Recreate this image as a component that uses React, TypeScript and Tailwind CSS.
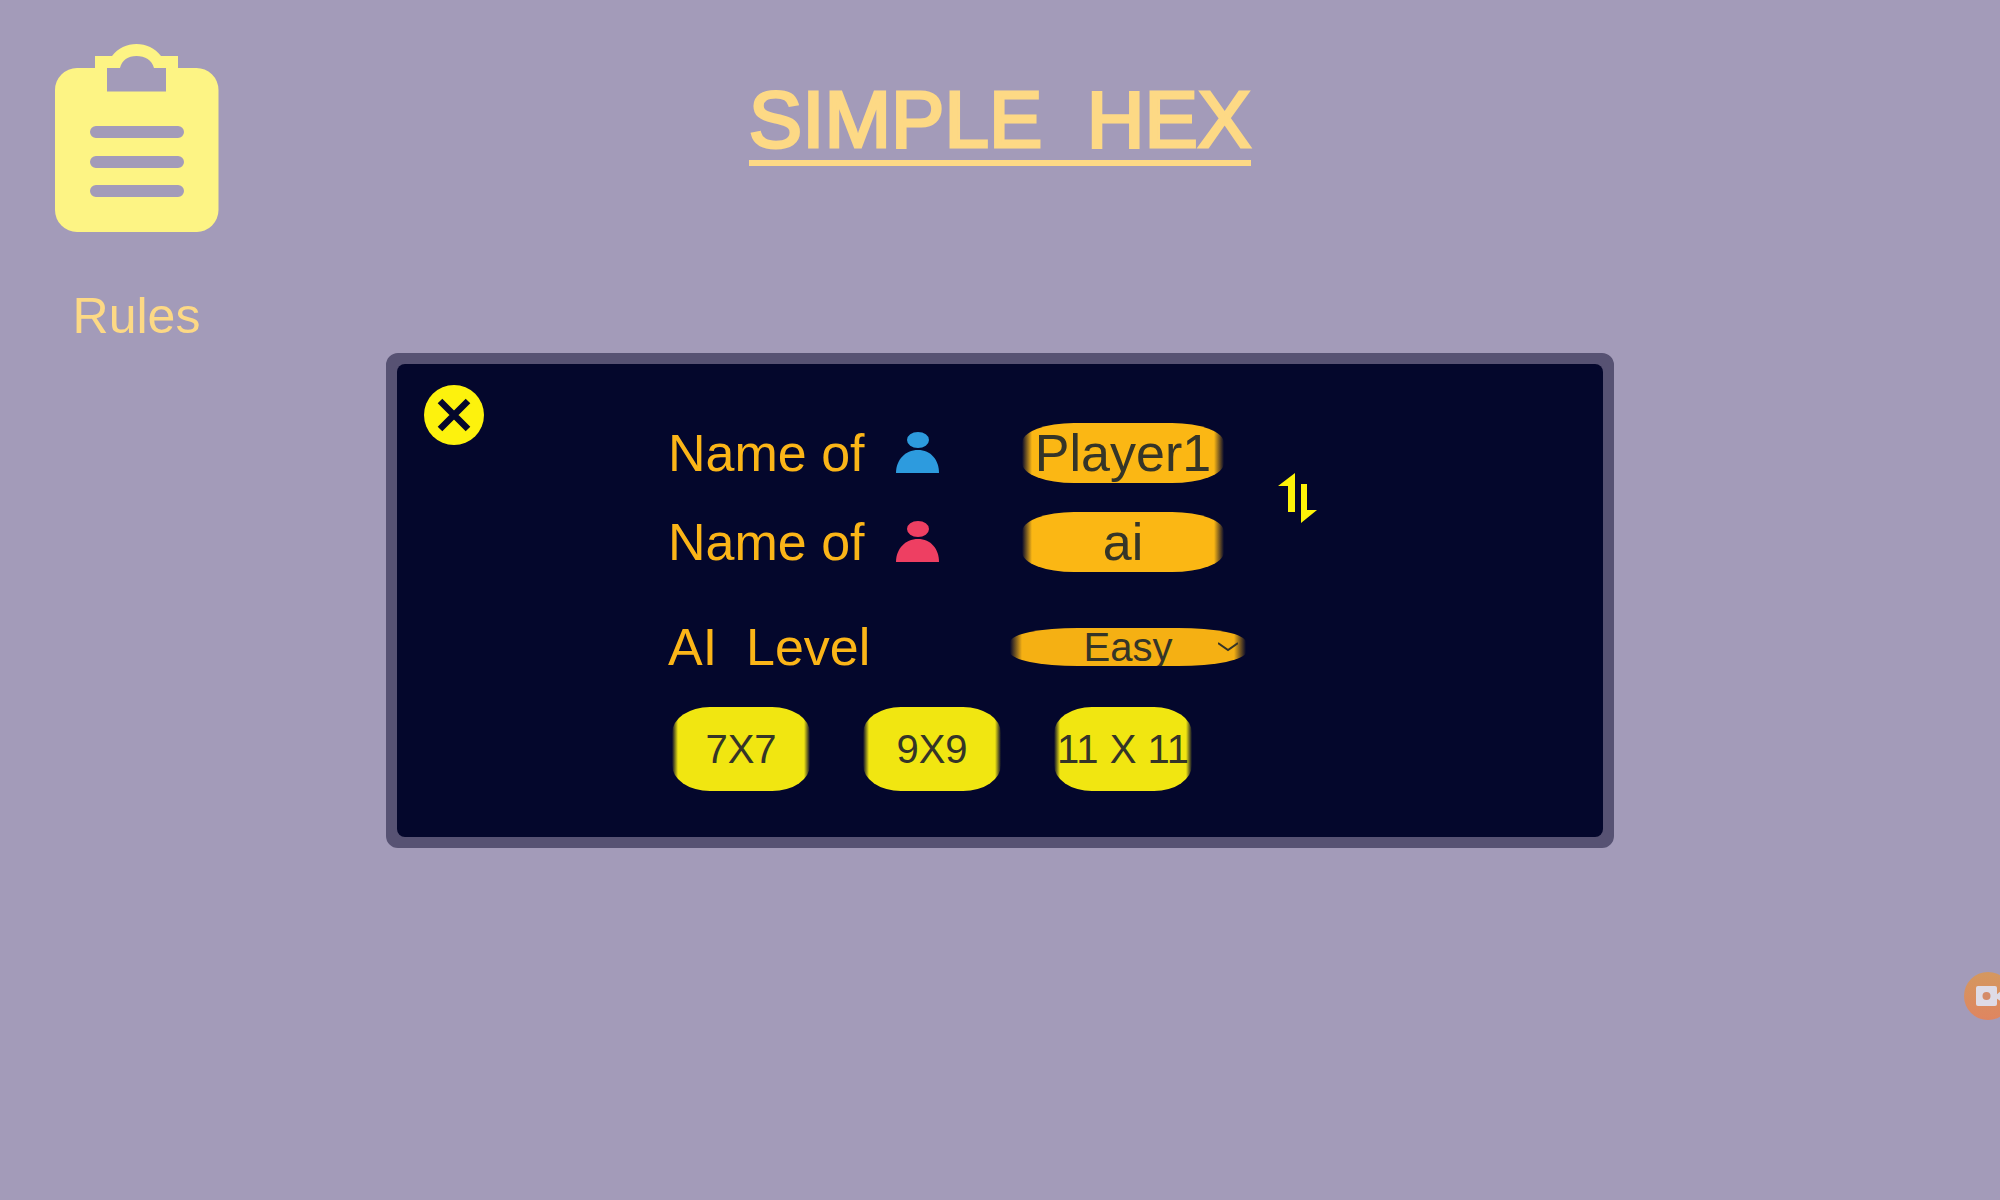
import React, { useState } from 'react';
import clsx from 'clsx';

const BOARD_SIZES = ['7X7', '9X9', '11 X 11'];
const LEVELS = ['Easy', 'Medium', 'Hard'];

const ClipboardIcon = () => (
  <svg viewBox="0 0 165 188" className="w-[165px]" fill="#fdf484" aria-hidden="true">
    <path
      fillRule="evenodd"
      d="M41 12H58C64 4 73 0 82.500 0S101 4 107 12H124V24H142A22 22 0 0 1 164.500 46V166A22 22 0 0 1 142 188H23A22 22 0 0 1 1 166V46A22 22 0 0 1 23 24H41ZM53 24V47.500H112V24H100C98 16 91 12 82.500 12S68 16 66 24ZM42 82a6 6 0 0 0 0 12h82a6 6 0 0 0 0-12ZM42 112a6 6 0 0 0 0 12h82a6 6 0 0 0 0-12ZM42 141a6 6 0 0 0 0 12h82a6 6 0 0 0 0-12Z"
    />
  </svg>
);

const PersonIcon = ({ className }: { className?: string }) => (
  <svg viewBox="0 0 44 42" className={clsx('w-11 h-[42px]', className)} fill="currentColor" aria-hidden="true">
    <ellipse cx="22" cy="8" rx="11" ry="8" />
    <path d="M0 41C0 28 9 18 22 18S43 28 43 41Z" />
  </svg>
);

const SwapIcon = () => (
  <svg viewBox="0 0 40 50" className="w-10 h-[50px]" fill="#fdf208" aria-hidden="true">
    <path d="M0 13L17 0V39H10V13ZM23 11H29V37H39L23 50Z" />
  </svg>
);

interface PlayerRowProps {
  id: string;
  color: string;
  value: string;
  onChange: (value: string) => void;
}

const PlayerRow = ({ id, color, value, onChange }: PlayerRowProps) => (
  <>
    <label htmlFor={id} className="col-start-1 flex items-center">
      <span className="w-[228px]">Name of</span>
      <PersonIcon className={color} />
    </label>
    <input
      id={id}
      value={value}
      onChange={(e) => onChange(e.target.value)}
      className="col-start-2 ml-3 w-[202px] h-[60px] rounded-[52px/20px] text-center text-[#353528] outline-none bg-[linear-gradient(90deg,transparent,#fbb714_10px,#fbb714_calc(100%-10px),transparent)]"
    />
  </>
);

export default function App() {
  const [names, setNames] = useState(['Player1', 'ai']);
  const [level, setLevel] = useState('Easy');

  return (
    <div className="relative min-h-screen overflow-hidden bg-[#a39bb9] font-['Liberation_Sans',Arial,sans-serif]">
      <header className="grid grid-cols-[1fr_auto_1fr] items-start px-[54px] pt-11 text-[#fdd985]">
        <a href="#rules" className="flex flex-col items-center gap-14 justify-self-start text-[50px] leading-[56px]">
          <ClipboardIcon />
          Rules
        </a>
        <h1 className="mt-9 border-b-6 border-current whitespace-pre text-[80px] leading-none [-webkit-text-stroke:3px_#fdd985] [stroke-linejoin:round]">
          SIMPLE  HEX
        </h1>
      </header>

      <main className="mt-[9px] flex justify-center px-8">
        <section
          role="dialog"
          aria-label="New game"
          className="flex w-full max-w-[1228px] items-start rounded-xl border-[11px] border-[#575273] bg-[#575273]"
        >
          <div className="flex w-full items-start rounded-lg bg-[#04072c] pb-[46px] pl-[27px]">
            <button type="button" aria-label="Close" className="mt-[21px] shrink-0">
              <svg viewBox="0 0 60 60" className="size-[60px]" aria-hidden="true">
                <circle cx="30" cy="30" r="30" fill="#fdf20d" />
                <path d="M16 16L44 44M44 16L16 44" stroke="#04072c" strokeWidth="6.500" />
              </svg>
            </button>

            <form
              onSubmit={(e) => e.preventDefault()}
              className="ml-[184px] mt-[59px] text-[52px] leading-none text-[#fbb518]"
            >
              <div className="grid grid-cols-[342px_236px_auto] items-center gap-y-[29px]">
                <PlayerRow
                  id="player-one"
                  color="text-[#2d9bde]"
                  value={names[0]}
                  onChange={(v) => setNames([v, names[1]])}
                />
                <PlayerRow
                  id="player-two"
                  color="text-[#ee3f62]"
                  value={names[1]}
                  onChange={(v) => setNames([names[0], v])}
                />
                <button
                  type="button"
                  aria-label="Swap players"
                  onClick={() => setNames([names[1], names[0]])}
                  className="col-start-3 row-start-1 row-span-2 ml-8"
                >
                  <SwapIcon />
                </button>
              </div>

              <div className="mt-[55px] grid grid-cols-[342px_236px] items-center">
                <label htmlFor="level" className="whitespace-pre leading-10">AI  Level</label>
                <div className="relative flex h-10 items-center">
                  <select
                    id="level"
                    value={level}
                    onChange={(e) => setLevel(e.target.value)}
                    className="h-[38px] w-full appearance-none rounded-[68px/14px] text-center text-[40px] leading-[38px] text-[#353528] outline-none bg-[linear-gradient(90deg,transparent,#f5b013_12px,#f5b013_calc(100%-12px),transparent)]"
                  >
                    {LEVELS.map((l) => (
                      <option key={l}>{l}</option>
                    ))}
                  </select>
                  <svg viewBox="0 0 20 10" className="pointer-events-none absolute right-2 h-[10px] w-5" fill="none" stroke="#353528" strokeWidth="2" aria-hidden="true">
                    <path d="M0 1L10 8L20 1" />
                  </svg>
                </div>
              </div>

              <div className="mt-10 flex gap-[53px] pl-1">
                {BOARD_SIZES.map((size) => (
                  <button
                    key={size}
                    type="submit"
                    className="h-[84px] w-[138px] whitespace-nowrap rounded-[38px/26px] text-[40px] text-[#353528] bg-[linear-gradient(90deg,transparent,#f1e611_6px,#f1e611_calc(100%-6px),transparent)]"
                  >
                    {size}
                  </button>
                ))}
              </div>
            </form>
          </div>
        </section>
      </main>

      {/* screen recorder bubble, half off the right edge */}
      <button type="button" aria-label="Record" className="absolute -right-3 top-[81%]">
        <svg viewBox="0 0 48 48" className="size-12" aria-hidden="true">
          <defs>
            <linearGradient id="bubble" x1="0" y1="0" x2="0" y2="1">
              <stop offset="0" stopColor="#d4985f" />
              <stop offset="1" stopColor="#df8560" />
            </linearGradient>
          </defs>
          <circle cx="24" cy="24" r="24" fill="url(#bubble)" />
          <rect x="12" y="14" width="21" height="20" rx="2" fill="#dedbe6" />
          <path d="M32 23L38 18V30L32 26Z" fill="#dedbe6" />
          <circle cx="22.500" cy="24" r="4" fill="#d58b68" />
        </svg>
      </button>
    </div>
  );
}
